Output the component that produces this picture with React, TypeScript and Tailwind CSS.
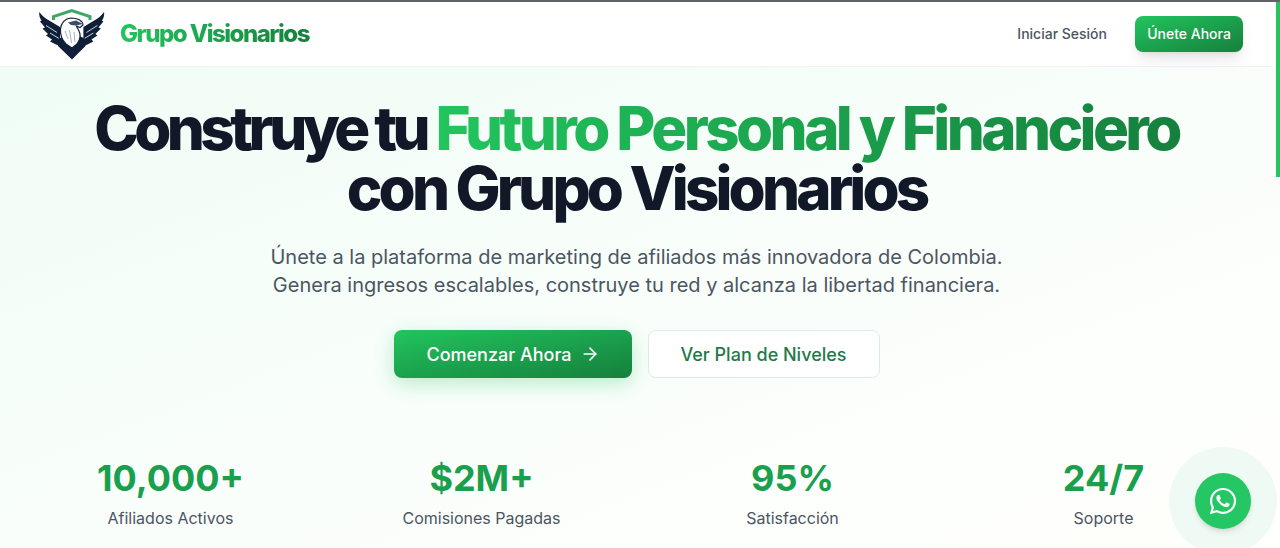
import { ArrowRight } from 'lucide-react';
import { FaWhatsapp } from 'react-icons/fa';

const stats = [
  { value: '10,000+', label: 'Afiliados Activos' },
  { value: '$2M+', label: 'Comisiones Pagadas' },
  { value: '95%', label: 'Satisfacción' },
  { value: '24/7', label: 'Soporte' },
];

const wing =
  'M39.3 10 C42 14 46 17 50 19 L60 25 L60 44 L56 42.5 L50 39.5 L52 37.5 L46 33.5 L48 32 L42.5 26.5 L45 25.5 L40 19.5 L41.5 18.5 C39.5 16 39 13 39.3 10 Z';
const slits = 'M46 23.5 L57 30.5 M50 31 L59 36.5';

// eagle + shield mark, drawn in page pixels offset by (38,6)
const LogoMark = () => (
  <svg width="68" height="52" viewBox="38 6 68 52" className="shrink-0">
    <path d="M53.5 18 V14.5 L71.7 8.5 L90 14.5 V18" fill="none" stroke="#3fa866" strokeWidth="3" />
    <path d={wing} fill="#0f1f3a" />
    <path d={slits} fill="none" stroke="#ffffff" strokeWidth="0.8" />
    <g transform="matrix(-1 0 0 1 143.4 0)">
      <path d={wing} fill="#0f1f3a" />
      <path d={slits} fill="none" stroke="#ffffff" strokeWidth="0.8" />
    </g>
    <path d="M58 37 L58 44 L72 57.5 L85.5 44 L85.5 37 L72 30 Z" fill="#0f1f3a" />
    <path
      d="M71 16 C65 16.5 61 21 60.5 27 C60 33 62 38 66 42 L72 46 L77 42 C80 38 81 33 79 29 C78 27 77 25.5 76.5 24 L80 25.5 L83 23 C83 19 78 16 71 16 Z"
      fill="#ffffff"
      stroke="#0f1f3a"
      strokeWidth="1.2"
    />
    <path d="M68 20.5 L76 18.5 L83 22 L76 23.5 L71 23 Z" fill="#3a4e66" />
    <path d="M65 29 L68 37 M69.5 28 L71.5 41 M74 30 L75 40" stroke="#a6b1bd" strokeWidth="1" fill="none" />
  </svg>
);

export default function App() {
  return (
    <div className="relative h-[548px] w-[1280px] overflow-hidden bg-white font-['Inter',sans-serif]">
      <div className="h-[2px] bg-[#5f6368]" />

      <div className="w-[1273px]">
        <header className="flex h-[65px] items-center justify-between border-b border-[#f1f3f4] pl-[38px] pr-[30px]">
          <div className="flex items-center gap-[14px]">
            <LogoMark />
            <span className="bg-gradient-to-r from-[#22c55e] to-[#15803d] bg-clip-text pr-[2px] text-[24px] font-extrabold tracking-[-0.0625em] text-transparent">
              Grupo Visionarios
            </span>
          </div>
          <nav className="flex items-center gap-7">
            <a className="text-sm font-medium text-[#4b5563]">Iniciar Sesión</a>
            <a className="flex h-9 w-[108px] items-center justify-center rounded-lg bg-gradient-to-br from-[#22c55e] to-[#15803d] text-sm font-medium text-white shadow-lg">
              Únete Ahora
            </a>
          </nav>
        </header>
      </div>

      <main className="h-[481px] w-full bg-gradient-to-br from-[#effdf5] via-[#f9fefb] to-[#fffffb]">
        <div className="flex w-[1273px] flex-col items-center px-[30px] pt-[31px]">
          <h1 className="text-center text-[60px] font-extrabold leading-[60px] tracking-[-0.064em] text-[#111827]">
            <span className="tracking-[-0.076em]">Construye tu</span>{' '}
            <span className="mr-[-4px] bg-gradient-to-r from-[#22c55e] to-[#15803d] bg-clip-text pr-[4px] tracking-[-0.06em] text-transparent">
              Futuro Personal y Financiero
            </span>
            <br />
            con Grupo Visionarios
          </h1>
          <p className="mt-[25px] text-center text-[20px] leading-7 text-[#4b5563]">
            Únete a la plataforma de marketing de afiliados más innovadora de Colombia.
            <br />
            Genera ingresos escalables, construye tu red y alcanza la libertad financiera.
          </p>
          <div className="mt-[31px] flex gap-4">
            <a className="flex h-12 w-[238px] items-center justify-center gap-2 rounded-lg bg-gradient-to-br from-[#22c55e] to-[#15803d] pl-px text-[18px] font-medium text-white shadow-[0_6px_20px_rgba(34,197,94,0.3)]">
              Comenzar Ahora
              <ArrowRight className="h-5 w-5" />
            </a>
            <a className="flex h-12 w-[232px] items-center justify-center rounded-lg border border-[#d8eee6] bg-white text-[18px] font-medium text-[#1f7a48]">
              Ver Plan de Niveles
            </a>
          </div>
          <div className="mt-[76px] grid w-full grid-cols-4 gap-8 pl-px text-center">
            {stats.map((s) => (
              <div key={s.label}>
                <div className="text-[36px] font-bold leading-[48px] text-[#1a9f4d]">{s.value}</div>
                <div className="mt-[4px] text-base leading-6 text-[#4b5563]">{s.label}</div>
              </div>
            ))}
          </div>
        </div>
      </main>

      {/* scrollbar thumb */}
      <div className="absolute right-0 top-[2px] h-[175px] w-[4px] bg-[#22c55e]" />

      {/* whatsapp button with halo */}
      <div className="absolute left-[1169px] top-[447px] flex h-[108px] w-[108px] items-center justify-center rounded-full bg-[#f0faf5]">
        <a className="flex h-14 w-14 items-center justify-center rounded-full bg-[#25c764] text-white shadow-md">
          <FaWhatsapp className="h-[30px] w-[30px]" />
        </a>
      </div>
    </div>
  );
}
